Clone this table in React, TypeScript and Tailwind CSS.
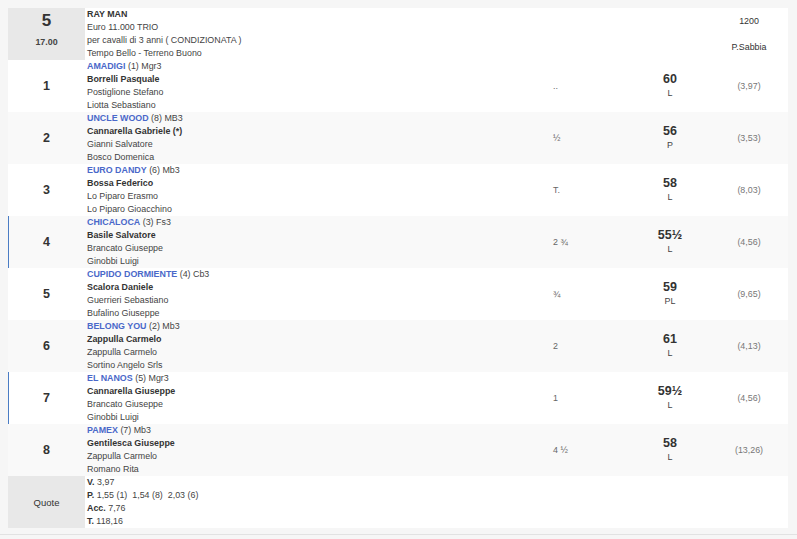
import type { ReactNode } from "react";

type Runner = {
    num: number;
    horse: string;
    extra: string;
    jockey: string;
    trainer: string;
    owner: string;
    dist: string;
    weight: string;
    weightSub: string;
    odds: string;
    mark?: boolean;
};

const runners: Runner[] = [
    { num: 1, horse: "AMADIGI", extra: "(1) Mgr3", jockey: "Borrelli Pasquale", trainer: "Postiglione Stefano", owner: "Liotta Sebastiano", dist: "..", weight: "60", weightSub: "L", odds: "(3,97)" },
    { num: 2, horse: "UNCLE WOOD", extra: "(8) MB3", jockey: "Cannarella Gabriele (*)", trainer: "Gianni Salvatore", owner: "Bosco Domenica", dist: "½", weight: "56", weightSub: "P", odds: "(3,53)" },
    { num: 3, horse: "EURO DANDY", extra: "(6) Mb3", jockey: "Bossa Federico", trainer: "Lo Piparo Erasmo", owner: "Lo Piparo Gioacchino", dist: "T.", weight: "58", weightSub: "L", odds: "(8,03)" },
    { num: 4, horse: "CHICALOCA", extra: "(3) Fs3", jockey: "Basile Salvatore", trainer: "Brancato Giuseppe", owner: "Ginobbi Luigi", dist: "2 ¾", weight: "55½", weightSub: "L", odds: "(4,56)", mark: true },
    { num: 5, horse: "CUPIDO DORMIENTE", extra: "(4) Cb3", jockey: "Scalora Daniele", trainer: "Guerrieri Sebastiano", owner: "Bufalino Giuseppe", dist: "¾", weight: "59", weightSub: "PL", odds: "(9,65)" },
    { num: 6, horse: "BELONG YOU", extra: "(2) Mb3", jockey: "Zappulla Carmelo", trainer: "Zappulla Carmelo", owner: "Sortino Angelo Srls", dist: "2", weight: "61", weightSub: "L", odds: "(4,13)" },
    { num: 7, horse: "EL NANOS", extra: "(5) Mgr3", jockey: "Cannarella Giuseppe", trainer: "Brancato Giuseppe", owner: "Ginobbi Luigi", dist: "1", weight: "59½", weightSub: "L", odds: "(4,56)", mark: true },
    { num: 8, horse: "PAMEX", extra: "(7) Mb3", jockey: "Gentilesca Giuseppe", trainer: "Zappulla Carmelo", owner: "Romano Rita", dist: "4 ½", weight: "58", weightSub: "L", odds: "(13,26)" },
];

const Row = ({ className, children }: { className?: string; children: ReactNode }) => (
    <div className={`grid grid-cols-[77px_465px_80px_80px_78px] h-[52px] ${className ?? ""}`}>
        {children}
    </div>
);

const App = () => {
    return (
        <div
            className="w-[797px] h-[539px] bg-[#f6f6f6] pt-2 text-[8.9px] leading-[13px] text-[#444]"
            style={{ fontFamily: '"Liberation Sans", Arial, sans-serif' }}
        >
            <div className="mx-2 w-[780px] bg-white">
                {/* header */}
                <Row className="bg-white">
                    <div className="bg-[#e8e8e8] flex flex-col items-center pt-[3px]">
                        <span className="text-[17px] leading-[20px] font-bold text-[#333]">5</span>
                        <span className="mt-[5px] font-bold text-[#444]">17.00</span>
                    </div>
                    <div className="pl-[2px]">
                        <div className="font-bold text-[#333]">RAY MAN</div>
                        <div>Euro 11.000 TRIO</div>
                        <div>per cavalli di 3 anni ( CONDIZIONATA )</div>
                        <div>Tempo Bello - Terreno Buono</div>
                    </div>
                    <div />
                    <div />
                    <div className="flex flex-col items-center pt-[7px] text-[#333]">
                        <span>1200</span>
                        <span className="mt-[13px]">P.Sabbia</span>
                    </div>
                </Row>

                {runners.map((r, i) => (
                    <Row
                        key={r.num}
                        className={`${i % 2 === 1 ? "bg-[#f9f9f9]" : "bg-white"} ${r.mark ? "shadow-[inset_1px_0_0_#4a7cc4]" : ""}`}
                    >
                        <div className="flex items-center justify-center text-[12.5px] font-bold text-[#333]">
                            {r.num}
                        </div>
                        <div className="pl-[2px]">
                            <div>
                                <span className="font-bold text-[#4a68c9]">{r.horse}</span> {r.extra}
                            </div>
                            <div className="font-bold text-[#333]">{r.jockey}</div>
                            <div>{r.trainer}</div>
                            <div>{r.owner}</div>
                        </div>
                        <div className="flex items-center pl-[3px] text-[#666]">{r.dist}</div>
                        <div className="flex flex-col items-center justify-center">
                            <span className="text-[12.5px] leading-[15px] font-bold text-[#333]">{r.weight}</span>
                            <span className="text-[#444]">{r.weightSub}</span>
                        </div>
                        <div className="flex items-center justify-center text-[#777]">{r.odds}</div>
                    </Row>
                ))}

                {/* quote */}
                <Row className="bg-white">
                    <div className="bg-[#e8e8e8] flex items-center justify-center text-[9.5px] text-[#333]">
                        Quote
                    </div>
                    <div className="pl-[2px]">
                        <div><b className="text-[#333]">V.</b> 3,97</div>
                        <div><b className="text-[#333]">P.</b> 1,55 (1)&nbsp; 1,54 (8)&nbsp; 2,03 (6)</div>
                        <div><b className="text-[#333]">Acc.</b> 7,76</div>
                        <div><b className="text-[#333]">T.</b> 118,16</div>
                    </div>
                    <div />
                    <div />
                    <div />
                </Row>
            </div>
            <div className="mt-[6px] border-b border-[#e2e2e2]" />
        </div>
    );
};

export default App;
